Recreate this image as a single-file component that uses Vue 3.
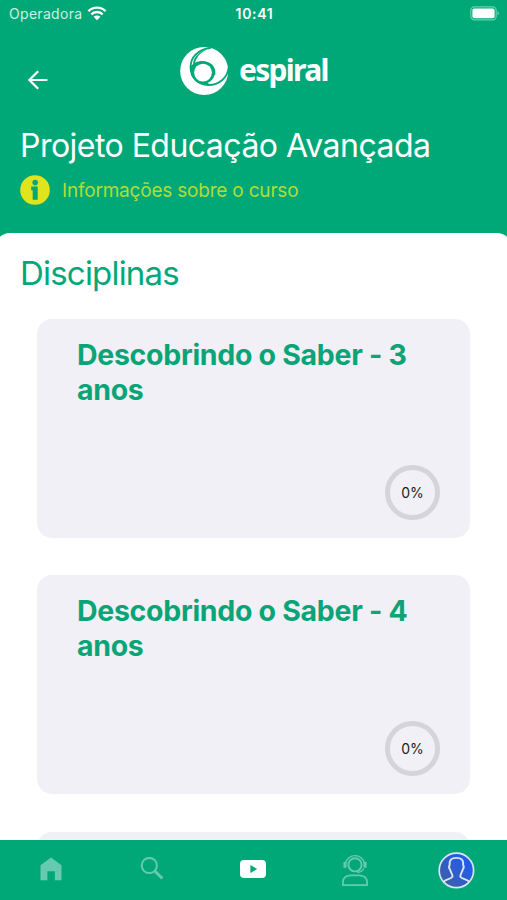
<template>
  <div class="screen">
    <header class="header">
      <!-- status bar -->
      <div class="status">
        <div class="carrier">
          <span class="carrier-name">Operadora</span>
          <svg width="20" height="15" viewBox="0 0 20 15">
            <path d="M1.4 5.2A12.3 12.3 0 0 1 18.6 5.2M4.3 8.3A8.2 8.2 0 0 1 15.7 8.3" fill="none" stroke="#fff" stroke-width="2.3" />
            <path d="M10 14.2L6.6 10.8A4.9 4.9 0 0 1 13.4 10.8Z" fill="#fff" />
          </svg>
        </div>
        <span class="time">10:41</span>
        <svg class="battery" width="30" height="15" viewBox="0 0 30 15">
          <rect x=".8" y=".8" width="25.4" height="13" rx="3.6" fill="none" stroke="#6bcdb0" stroke-width="1.2" />
          <rect x="2.4" y="2.4" width="22.2" height="9.8" rx="2" fill="#fff" />
          <path d="M27.5 5Q30.3 7.3 27.5 9.6Z" fill="#6bcdb0" />
        </svg>
      </div>
      <!-- back + logo -->
      <div class="brand">
        <button class="back" type="button" aria-label="Voltar">
          <svg width="20" height="20" viewBox="0 0 20 20">
            <path d="M19.4 10H2M10.2 1.2L1.4 10L10.2 18.8" fill="none" stroke="#fff" stroke-width="2.2" />
          </svg>
        </button>
        <div class="logo">
          <svg width="50" height="50" viewBox="0 0 50 50">
            <circle cx="24.2" cy="25" r="24" fill="#fff" />
            <path d="M31 1.8C17 3.5 10.6 12 10.6 21C10.6 32 18 39 28.5 39C39 39 47.4 32 48.6 22" fill="none" stroke="#00a878" stroke-width="1.9" />
            <path d="M10.5 21C12.5 17 17.5 15 22.5 15C30 15 35.4 20 35.4 26.8C35.4 33 31 38 25 38.6C17 37.5 11 31 10.5 21Z" fill="#00a878" />
            <path d="M30 2.5C20 5 14 10 13 17.5L14.6 17.8C17 9 23 4.5 30 2.5Z" fill="#00a878" />
            <circle cx="23" cy="26.6" r="8.9" fill="#fff" />
            <path d="M27.5 37C31.5 35.5 34 32 34.6 29L36.5 29Q36 34 32.5 37.5Z" fill="#fff" />
          </svg>
          <span class="logo-text">espiral</span>
        </div>
      </div>
      <h1>{{ course }}</h1>
      <div class="info">
        <svg width="30" height="30" viewBox="0 0 30 30">
          <circle cx="15" cy="15" r="14.8" fill="#dfe41c" />
          <circle cx="15.2" cy="7.6" r="2.8" fill="#00a878" />
          <path d="M11.2 11.5H17.7V24.8H12.7V15.2H11.2Z" fill="#00a878" />
        </svg>
        <span>Informações sobre o curso</span>
      </div>
    </header>

    <main class="content">
      <h2>Disciplinas</h2>
      <div class="list">
        <div class="card" v-for="item in subjects" :key="item.id">
          <template v-if="item.title">
            <h3>{{ item.title }}</h3>
            <div class="progress">{{ item.progress }}%</div>
          </template>
        </div>
      </div>
    </main>

    <nav class="tabs">
      <!-- home -->
      <button class="small" type="button" aria-label="Início">
        <svg width="22" height="24" viewBox="0 0 22 24">
          <path d="M.5 8.2L11 .6L21.5 8.2V23.2H14.8V14.2H7.4V23.2H.5Z" fill="#66caae" />
        </svg>
      </button>
      <!-- search -->
      <button class="small" type="button" aria-label="Buscar">
        <svg width="24" height="24" viewBox="0 0 24 24">
          <circle cx="9.3" cy="8.5" r="7.6" fill="none" stroke="#66caae" stroke-width="2" />
          <path d="M14.8 14L22.3 21.5" stroke="#66caae" stroke-width="3" />
        </svg>
      </button>
      <!-- videos -->
      <button class="small" type="button" aria-label="Vídeos">
        <svg width="26" height="24" viewBox="0 0 26 24">
          <rect x="0" y="3" width="26" height="18" rx="4" fill="#fff" />
          <path d="M10.4 8.1L17.2 12L10.4 15.9Z" fill="#00a878" />
        </svg>
      </button>
      <!-- support -->
      <button type="button" aria-label="Suporte">
        <svg width="28" height="34" viewBox="0 0 28 34" fill="none" stroke="#66caae">
          <circle cx="14" cy="11.8" r="6.6" stroke-width="1.9" />
          <path d="M4.4 10.5A9.8 9.8 0 0 1 23.6 10.5M22.8 15.5Q21 19.3 16 19.4" stroke-width="1.3" />
          <path d="M4 9V14.8M24 9V14.8" stroke-width="3" />
          <path d="M1.9 32.1V28.8Q2.5 22.9 9.5 22.4H18.5Q25.5 22.9 26.1 28.8V32.1Z" stroke-width="1.8" />
        </svg>
      </button>
      <!-- profile -->
      <button type="button" aria-label="Perfil">
        <svg width="38" height="38" viewBox="0 0 38 38">
          <defs>
            <linearGradient id="avatar" x1="0" y1="1" x2="1" y2="0">
              <stop offset="0.2" stop-color="#3b5fad" />
              <stop offset="0.75" stop-color="#235ce8" />
            </linearGradient>
          </defs>
          <circle cx="19.4" cy="19.4" r="17.2" fill="url(#avatar)" stroke="#dce5f4" stroke-width="1.7" />
          <path d="M6.9 30.6C9 28 14.4 28.2 15.5 25.7C15.8 23.6 13.7 21.4 13 18.5C11.9 17 12 14.8 12.7 13.7C12.1 8.6 14.9 6.9 19.4 6.9S26.7 8.6 26.1 13.7C26.8 14.8 26.9 17 25.8 18.5C25.1 21.4 23 23.6 23.3 25.7C24.4 28.2 29.8 28 31.9 30.6" fill="none" stroke="#dce5f4" stroke-width="1.9" />
        </svg>
      </button>
    </nav>
  </div>
</template>

<script setup>
import { ref } from "vue";

const course = ref("Projeto Educação Avançada");

// a card without a title is a placeholder
const subjects = ref([
  { id: 1, title: "Descobrindo o Saber - 3 anos", progress: 0 },
  { id: 2, title: "Descobrindo o Saber - 4 anos", progress: 0 },
  { id: 3, title: "", progress: 0 },
]);
</script>

<style>
body {
  margin: 0;
  overflow: hidden;
}
</style>

<style scoped>
.screen {
  display: flex;
  flex-direction: column;
  height: 900px;
  overflow: hidden;
  background-color: #00a878;
  font-family: Inter, "Liberation Sans", sans-serif;
}
button {
  display: flex;
  align-items: center;
  justify-content: center;
  padding: 0;
  border: none;
  background: none;
  cursor: pointer;
}
h1,
h2,
h3 {
  margin: 0;
  font-weight: 400;
}
.header {
  height: 233px;
  flex-shrink: 0;
  color: #fff;
}
.status {
  display: grid;
  grid-template-columns: 1fr auto 1fr;
  align-items: center;
  height: 27px;
  padding: 0 7px 0 9px;
  font-size: 14px;
}
.carrier {
  display: flex;
  align-items: center;
  gap: 5px;
}
.carrier-name {
  letter-spacing: 0.3px;
  color: #c9f0e3;
}
.time {
  font-weight: 600;
  letter-spacing: 0.7px;
}
.battery {
  justify-self: end;
}
.brand {
  display: grid;
  grid-template-columns: 180px auto;
  height: 90px;
}
.back {
  align-self: start;
  justify-self: start;
  margin: 43px 0 0 28px;
}
.logo {
  display: flex;
  align-items: flex-start;
  gap: 9px;
  padding-top: 19px;
}
.logo-text {
  margin-top: 3px;
  font-family: "Noto Sans", sans-serif;
  font-size: 30px;
  font-weight: 700;
  line-height: 42px;
  letter-spacing: -1.7px;
}
h1 {
  padding: 9px 0 0 20px;
  font-size: 32px;
  line-height: 40px;
  letter-spacing: -0.53px;
  white-space: nowrap;
}
.info {
  display: flex;
  align-items: center;
  gap: 12px;
  padding: 9px 0 0 20px;
  color: #b1dc35;
  font-size: 19px;
  letter-spacing: -0.2px;
  white-space: nowrap;
}
.content {
  flex: 1;
  min-height: 0;
  margin: 0 -5px;
  padding: 0 5px;
  overflow: hidden;
  border-radius: 15px 15px 0 0;
  background-color: #fff;
}
h2 {
  padding: 20px 0 0 20px;
  color: #00a878;
  font-size: 33px;
  line-height: 40px;
  letter-spacing: -0.8px;
}
.list {
  display: flex;
  flex-direction: column;
  gap: 37.1px;
  padding: 26px 37px 0;
}
.card {
  display: flex;
  flex-direction: column;
  justify-content: space-between;
  box-sizing: border-box;
  height: 219.2px;
  flex-shrink: 0;
  padding: 18px 30px 18px 40px;
  border-radius: 15px;
  background-color: #f1f0f6;
}
h3 {
  color: #0ba476;
  font-size: 28.5px;
  font-weight: 700;
  line-height: 35px;
  letter-spacing: -0.3px;
}
.progress {
  display: flex;
  align-items: center;
  justify-content: center;
  align-self: flex-end;
  box-sizing: border-box;
  width: 55px;
  height: 55px;
  border: 5px solid #d5d4d9;
  border-radius: 50%;
  color: #222;
  font-size: 14px;
}
.tabs {
  display: grid;
  grid-template-columns: repeat(5, 1fr);
  align-items: center;
  height: 60px;
  flex-shrink: 0;
}
.small {
  padding-bottom: 2px;
}
</style>
